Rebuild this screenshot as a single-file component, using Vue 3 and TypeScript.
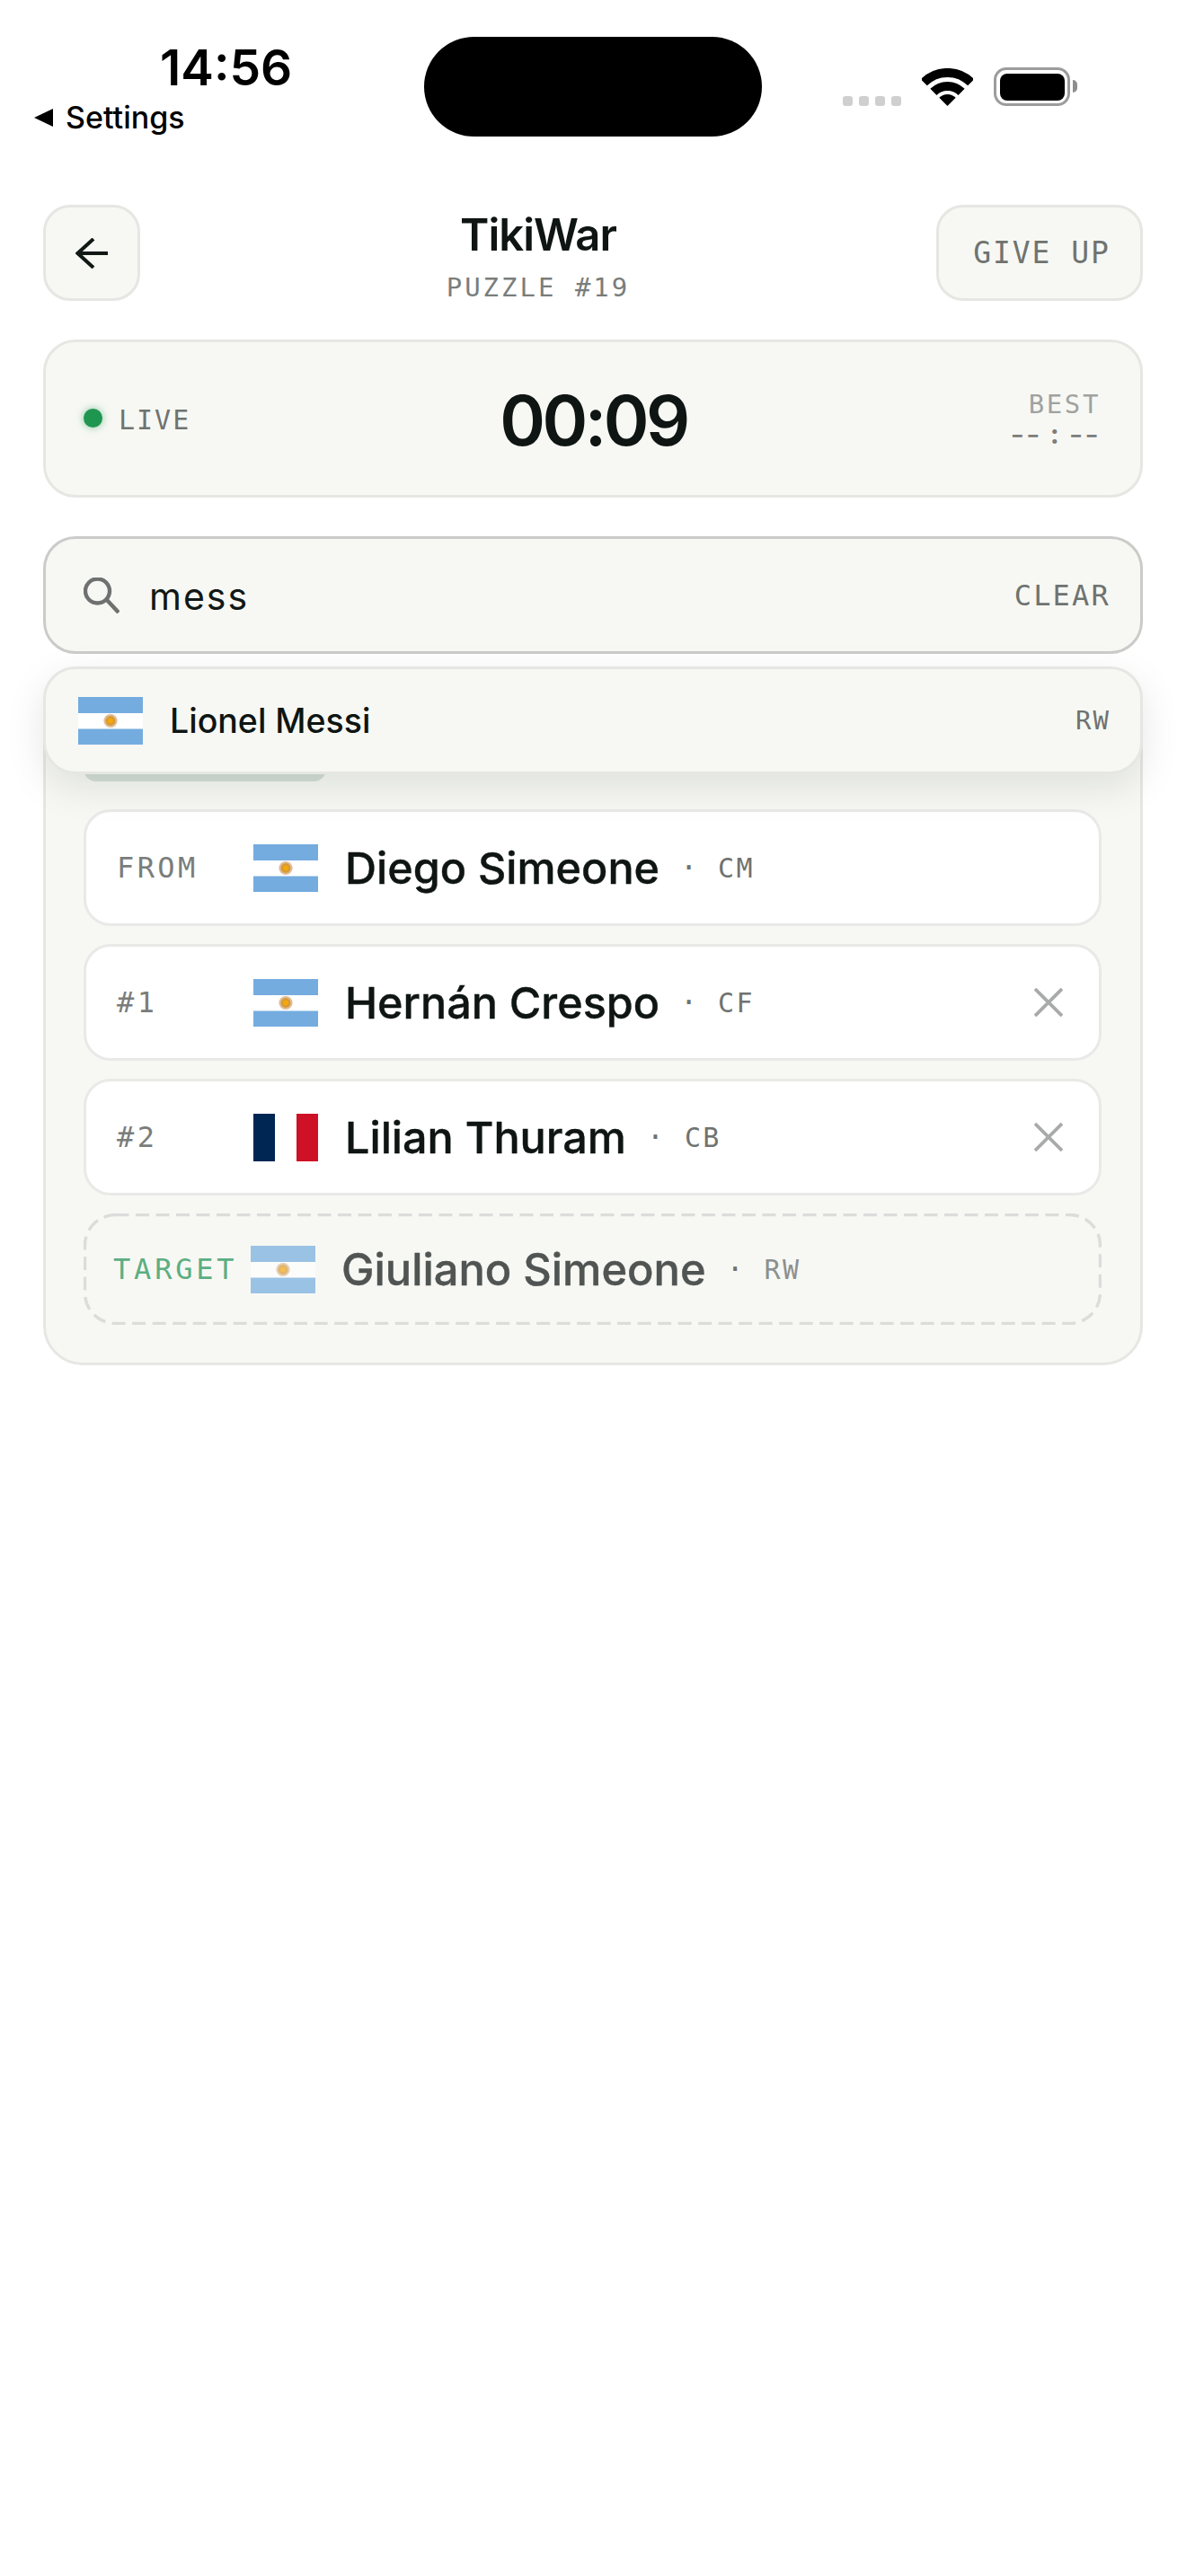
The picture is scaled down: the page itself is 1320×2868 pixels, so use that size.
<script setup lang="ts">
interface Row { label: string; flag: 'ar' | 'fr'; name: string; pos: string; removable: boolean }
const rows: Row[] = [
  { label: 'FROM', flag: 'ar', name: 'Diego Simeone', pos: 'CM', removable: false },
  { label: '#1', flag: 'ar', name: 'Hernán Crespo', pos: 'CF', removable: true },
  { label: '#2', flag: 'fr', name: 'Lilian Thuram', pos: 'CB', removable: true },
]
</script>

<template>
  <div class="page">
    <div class="status">
      <div class="status-left">
        <div class="time">14:56</div>
        <div class="settings"><span class="tri"></span>Settings</div>
      </div>
      <div class="island"></div>
      <div class="status-right">
        <div class="signal"><i></i><i></i><i></i><i></i></div>
        <svg class="wifi" width="57" height="42" viewBox="0 0 57 42">
          <path d="M2.3 15.8A37 37 0 0 1 54.7 15.8" fill="none" stroke="#000" stroke-width="10" />
          <path d="M12.9 26.4A22 22 0 0 1 44.1 26.4" fill="none" stroke="#000" stroke-width="10" />
          <path d="M28.5 42L19.3 32.8A13 13 0 0 1 37.7 32.8Z" fill="#000" />
        </svg>
        <div class="battery"><div class="battery-fill"></div></div>
        <div class="nub"></div>
      </div>
    </div>

    <main class="content">
      <header class="header">
        <button class="back">
          <svg width="36" height="34" viewBox="0 0 36 34" fill="none" stroke="#111816" stroke-width="4">
            <path d="M36 17H2.5M20 1L2.5 17L20 33" />
          </svg>
        </button>
        <div class="title-wrap">
          <div class="title">TikiWar</div>
          <div class="subtitle">PUZZLE #19</div>
        </div>
        <button class="give-up">GIVE UP</button>
      </header>

      <section class="timer">
        <div class="live"><span class="live-dot"></span><span class="live-text">LIVE</span></div>
        <div class="clock">00:09</div>
        <div class="best">
          <div class="best-label">BEST</div>
          <div class="best-value"><span class="dash">--</span><span class="colon">:</span><span class="dash">--</span></div>
        </div>
      </section>

      <div class="search-wrap">
        <div class="search">
          <svg class="search-icon" width="40" height="40" viewBox="0 0 40 40" fill="none" stroke="#6e716f" stroke-width="4.4">
            <circle cx="15.5" cy="15" r="13.5" />
            <path d="M26 25L39 39" />
          </svg>
          <span class="query">mess</span>
          <span class="clear">CLEAR</span>
        </div>
        <div class="dropdown">
          <svg class="flag" viewBox="0 0 72 53">
            <rect width="72" height="53" fill="#fff" />
            <rect width="72" height="18" fill="#74acdf" />
            <rect y="35.5" width="72" height="17.5" fill="#74acdf" />
            <circle cx="36" cy="26.5" r="7.6" fill="#dfbd95" />
            <circle cx="36" cy="26.5" r="5.4" fill="#d8993a" />
            <circle cx="36" cy="26.5" r="3" fill="#f2a80c" />
          </svg>
          <span class="drop-name">Lionel Messi</span>
          <span class="drop-pos">RW</span>
        </div>
      </div>

      <section class="card">
        <div class="pill"></div>
        <div class="list">
          <div v-for="r in rows" :key="r.name" class="row">
            <span class="label">{{ r.label }}</span>
            <svg v-if="r.flag === 'ar'" class="flag" viewBox="0 0 72 53">
              <rect width="72" height="53" fill="#fff" />
              <rect width="72" height="18" fill="#74acdf" />
              <rect y="35.5" width="72" height="17.5" fill="#74acdf" />
              <circle cx="36" cy="26.5" r="7.6" fill="#dfbd95" />
              <circle cx="36" cy="26.5" r="5.4" fill="#d8993a" />
              <circle cx="36" cy="26.5" r="3" fill="#f2a80c" />
            </svg>
            <svg v-else class="flag" viewBox="0 0 72 53">
              <rect width="24" height="53" fill="#002654" />
              <rect x="24" width="24" height="53" fill="#fff" />
              <rect x="48" width="24" height="53" fill="#ce1126" />
            </svg>
            <span class="name">{{ r.name }}</span>
            <span class="sep">·</span>
            <span class="pos">{{ r.pos }}</span>
            <svg v-if="r.removable" class="x" width="32" height="32" viewBox="0 0 32 32" fill="none" stroke="#a9abaa" stroke-width="3.8">
              <path d="M1 1L31 31M31 1L1 31" />
            </svg>
          </div>
          <div class="row target">
            <svg class="dashes" aria-hidden="true"><rect /></svg>
            <span class="label">TARGET</span>
            <svg class="flag" viewBox="0 0 72 53">
              <rect width="72" height="53" fill="#fff" />
              <rect width="72" height="18" fill="#74acdf" />
              <rect y="35.5" width="72" height="17.5" fill="#74acdf" />
              <circle cx="36" cy="26.5" r="7.6" fill="#dfbd95" />
              <circle cx="36" cy="26.5" r="5.4" fill="#d8993a" />
              <circle cx="36" cy="26.5" r="3" fill="#f2a80c" />
            </svg>
            <span class="name">Giuliano Simeone</span>
            <span class="sep">·</span>
            <span class="pos">RW</span>
          </div>
        </div>
      </section>
    </main>
  </div>
</template>

<style scoped>
.page {
  width: 1320px;
  min-height: 2868px;
  background: #fff;
  font-family: Inter, "Liberation Sans", sans-serif;
  color: #0e1512;
}
.status {
  position: relative;
  height: 228px;
  display: flex;
  justify-content: space-between;
  box-sizing: border-box;
  padding: 0 121px 0 38px;
}
.status-left { display: flex; flex-direction: column; }
.time {
  margin: 43px 0 0 140px;
  font-size: 55px;
  line-height: 64px;
  font-weight: 600;
  color: #000;
}
.settings {
  display: flex;
  align-items: center;
  gap: 14px;
  font-size: 34px;
  line-height: 40px;
  font-weight: 500;
  color: #000;
  margin-top: 4px;
}
.tri {
  width: 0;
  height: 0;
  border-top: 10px solid transparent;
  border-bottom: 10px solid transparent;
  border-right: 21px solid #000;
}
.island {
  position: absolute;
  left: 472px;
  top: 41px;
  width: 376px;
  height: 111px;
  border-radius: 56px;
  background: #000;
}
.status-right {
  display: flex;
  align-items: flex-end;
  height: 118px;
}
.signal { display: flex; gap: 7px; margin-right: 23px; }
.signal i {
  display: block;
  width: 11px;
  height: 11px;
  border-radius: 3px;
  background: #cfcfcf;
}
.wifi { margin-right: 23px; }
.battery {
  width: 85px;
  height: 43px;
  box-sizing: border-box;
  border: 3.5px solid #9c9c9c;
  border-radius: 14px;
  padding: 3.5px;
}
.battery-fill { width: 100%; height: 100%; background: #000; border-radius: 8px; }
.nub {
  width: 5px;
  height: 14px;
  margin: 0 0 15px 3px;
  background: #8e8e8e;
  border-radius: 0 5px 5px 0;
}
.content {
  display: flex;
  flex-direction: column;
  gap: 43px;
  padding: 0 48px;
}
.header {
  display: flex;
  justify-content: space-between;
  align-items: center;
  height: 107px;
}
.back, .give-up {
  height: 107px;
  box-sizing: border-box;
  border: 3px solid #e6e7e3;
  background: #f7f8f4;
  border-radius: 30px;
  padding: 0;
  display: flex;
  align-items: center;
  justify-content: center;
}
.back { width: 108px; }
.give-up {
  width: 230px;
  padding-left: 5px;
  font-family: "DejaVu Sans Mono", monospace;
  font-size: 33px;
  letter-spacing: 1.9px;
  color: #6f7370;
}
.title-wrap { text-align: center; padding-top: 6px; }
.title {
  font-size: 49px;
  line-height: 58px;
  font-weight: 600;
  letter-spacing: -1px;
}
.subtitle {
  margin-top: 13px;
  font-family: "DejaVu Sans Mono", monospace;
  font-size: 29px;
  line-height: 32px;
  letter-spacing: 3px;
  color: #7a7d7b;
}
.timer {
  height: 176px;
  box-sizing: border-box;
  border: 3px solid #e6e7e3;
  border-radius: 36px;
  background: #f7f8f4;
  padding: 0 44px 0 42px;
  display: grid;
  grid-template-columns: 1fr auto 1fr;
  align-items: center;
}
.live {
  display: flex;
  align-items: center;
  gap: 18px;
  font-family: "DejaVu Sans Mono", monospace;
  font-size: 30px;
  letter-spacing: 2px;
  color: #6f7370;
}
.live-text { padding-top: 3px; }
.live-dot {
  width: 21px;
  height: 21px;
  border-radius: 50%;
  background: #1f9650;
  box-shadow: 0 0 9px rgba(31, 150, 80, 0.55);
  margin-bottom: 2px;
}
.clock {
  font-size: 77px;
  line-height: 90px;
  font-weight: 600;
  letter-spacing: -3.5px;
  padding-top: 3px;
  padding-left: 3px;
}
.best {
  text-align: right;
  font-family: "DejaVu Sans Mono", monospace;
  padding-top: 1px;
}
.best-label {
  font-size: 29px;
  line-height: 30px;
  letter-spacing: 2.6px;
  color: #a0a2a0;
}
.best-value {
  display: flex;
  justify-content: flex-end;
  align-items: center;
  gap: 6px;
  height: 30px;
  margin-top: 4px;
  color: #7c7e7c;
}
.dash {
  font-family: Inter, sans-serif;
  font-size: 34px;
  line-height: 30px;
  letter-spacing: 2px;
}
.colon {
  font-size: 30px;
  line-height: 30px;
  font-family: Inter, sans-serif;
  font-weight: 700;
  margin: 0 5px 2px 3px;
}
.search-wrap { position: relative; }
.search {
  height: 131px;
  box-sizing: border-box;
  border: 3px solid #cbccc9;
  border-radius: 36px;
  background: #f7f8f4;
  padding: 0 33px 0 42px;
  display: flex;
  align-items: center;
}
.search-icon { margin-right: 33px; }
.query {
  font-size: 41px;
  letter-spacing: 2px;
  color: #111816;
  padding-top: 2px;
}
.clear {
  margin-left: auto;
  font-family: "DejaVu Sans Mono", monospace;
  font-size: 32px;
  letter-spacing: 2.2px;
  color: #6f7370;
}
.dropdown {
  position: absolute;
  left: 0;
  right: 0;
  top: 145px;
  z-index: 2;
  height: 120px;
  box-sizing: border-box;
  border: 3px solid #e6e7e3;
  border-radius: 36px;
  background: #f7f8f4;
  box-shadow: 0 14px 44px rgba(14, 21, 18, 0.1);
  padding: 0 33px 0 36px;
  display: flex;
  align-items: center;
}
.flag { width: 72px; height: 53px; flex: none; }
.drop-name {
  margin-left: 30px;
  font-size: 37.5px;
  font-weight: 500;
}
.drop-pos {
  margin-left: auto;
  font-family: "DejaVu Sans Mono", monospace;
  font-size: 29px;
  letter-spacing: 2px;
  color: #6f7370;
}
.card {
  box-sizing: border-box;
  height: 749px;
  border: 3px solid #e6e7e3;
  border-radius: 44px;
  background: #f7f8f4;
  padding: 44px 43px 42px 42px;
  display: flex;
  flex-direction: column;
  gap: 31px;
}
.pill {
  width: 270px;
  height: 52px;
  flex: none;
  background: #d3ded6;
  border-radius: 14px;
}
.list { display: flex; flex-direction: column; gap: 20px; }
.row {
  height: 130px;
  box-sizing: border-box;
  border: 3px solid #e9eae7;
  border-radius: 30px;
  background: #fff;
  padding: 0 40px 0 34px;
  display: flex;
  align-items: center;
}
.label {
  width: 152px;
  flex: none;
  font-family: "DejaVu Sans Mono", monospace;
  font-size: 32px;
  letter-spacing: 3.4px;
  color: #7a7d7b;
}
.name {
  margin-left: 30px;
  font-size: 48.5px;
  font-weight: 500;
  -webkit-text-stroke: 0.4px currentColor;
  white-space: nowrap;
}
.sep {
  width: 65px;
  flex: none;
  text-align: center;
  font-family: "DejaVu Sans Mono", monospace;
  font-size: 32px;
  color: #6f7370;
}
.pos {
  font-family: "DejaVu Sans Mono", monospace;
  font-size: 30px;
  letter-spacing: 2.4px;
  color: #6f7370;
}
.x { margin-left: auto; }
.target {
  position: relative;
  height: 124px;
  border: none;
  background: transparent;
  padding-left: 33px;
}
.dashes {
  position: absolute;
  inset: 0;
  width: 100%;
  height: 100%;
  pointer-events: none;
}
.dashes rect {
  x: 1.5px;
  y: 1.5px;
  width: calc(100% - 3px);
  height: calc(100% - 3px);
  rx: 34px;
  fill: none;
  stroke: #dcdddb;
  stroke-width: 3.4px;
  stroke-dasharray: 15 7.5;
}
.target .label { width: 153px; color: #5cae82; letter-spacing: 3.8px; }
.target .flag { opacity: 0.7; }
.target .name { margin-left: 29px; color: #505452; font-size: 48.8px; }
.target .pos { color: #8d908e; }
</style>
